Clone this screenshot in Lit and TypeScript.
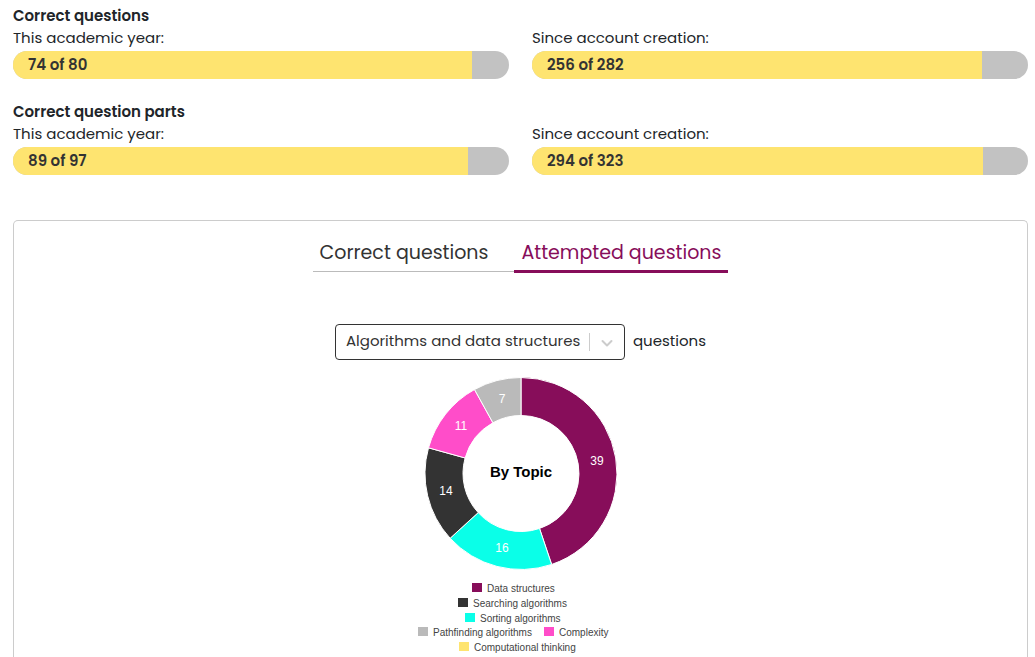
import { LitElement, html, svg, css } from "lit";
import { customElement, property, state } from "lit/decorators.js";
import { classMap } from "lit/directives/class-map.js";

@customElement("progress-meter")
export class ProgressMeter extends LitElement {
  @property() label = "";
  @property({ type: Number }) value = 0;
  @property({ type: Number }) max = 1;

  static styles = css`
    :host {
      display: block;
    }
    .label {
      padding-bottom: 2px;
      line-height: 22px;
    }
    .track {
      height: 28px;
      border-radius: 14px;
      background: #c2c2c2;
      overflow: hidden;
    }
    .fill {
      box-sizing: border-box;
      height: 100%;
      padding-left: 15px;
      background: #fee470;
      color: #333;
      font-weight: 600;
      line-height: 28px;
      white-space: nowrap;
    }
  `;

  render() {
    return html`
      <div class="label" id="label">${this.label}</div>
      <div
        class="track"
        role="progressbar"
        aria-labelledby="label"
        aria-valuemin="0"
        aria-valuenow=${this.value}
        aria-valuemax=${this.max}
      >
        <div class="fill" style="width:${(100 * this.value) / this.max}%">
          ${this.value} of ${this.max}
        </div>
      </div>
    `;
  }
}

interface Slice {
  name: string;
  count: number;
  color: string;
}

const DATA: Slice[] = [
  { name: "Data structures", count: 39, color: "#870d5a" },
  { name: "Sorting algorithms", count: 16, color: "#0affe8" },
  { name: "Searching algorithms", count: 14, color: "#333333" },
  { name: "Complexity", count: 11, color: "#ff4dc9" },
  { name: "Pathfinding algorithms", count: 7, color: "#bababa" },
];

const LEGEND = [
  { name: "Data structures", color: "#870d5a", x: 72, y: 220 },
  { name: "Searching algorithms", color: "#333333", x: 58, y: 235 },
  { name: "Sorting algorithms", color: "#0affe8", x: 65, y: 250 },
  { name: "Pathfinding algorithms", color: "#bababa", x: 18, y: 264 },
  { name: "Complexity", color: "#ff4dc9", x: 144, y: 264 },
  { name: "Computational thinking", color: "#fee470", x: 59, y: 279 },
];

@customElement("topic-donut")
export class TopicDonut extends LitElement {
  static styles = css`
    :host {
      display: block;
    }
    svg {
      display: block;
      font-family: "Liberation Sans", Arial, sans-serif;
    }
    .slice {
      stroke: #fff;
      stroke-width: 1px;
    }
    .count {
      fill: #fff;
      font-size: 12px;
      text-anchor: middle;
    }
    .title {
      font-size: 15px;
      font-weight: 700;
      text-anchor: middle;
    }
    .key {
      fill: #444;
      font-size: 10px;
    }
  `;

  private slices() {
    const cx = 121;
    const cy = 105.5;
    const outer = 96;
    const inner = 58;
    const middle = 77;
    const total = DATA.reduce((sum, d) => sum + d.count, 0);
    const at = (r: number, a: number) =>
      `${(cx + r * Math.sin(a)).toFixed(2)} ${(cy - r * Math.cos(a)).toFixed(2)}`;
    let start = 0;
    return DATA.map((d) => {
      const end = start + (d.count / total) * Math.PI * 2;
      const mid = (start + end) / 2;
      const large = end - start > Math.PI ? 1 : 0;
      const path = `M${at(outer, start)}A${outer} ${outer} 0 ${large} 1 ${at(outer, end)}L${at(inner, end)}A${inner} ${inner} 0 ${large} 0 ${at(inner, start)}Z`;
      start = end;
      return svg`
        <path class="slice" fill=${d.color} d=${path}></path>
        <text class="count" x=${Math.round(cx + middle * Math.sin(mid))} y=${Math.round(cy - middle * Math.cos(mid)) + 4}>${d.count}</text>
      `;
    });
  }

  render() {
    return html`
      <svg width="242" height="286" role="img" aria-label="Questions by topic">
        ${this.slices()}
        <text class="title" x="121" y="109">By Topic</text>
        ${LEGEND.map(
          (k) => svg`
            <rect x=${k.x} y=${k.y - 5} width="10" height="9" fill=${k.color}></rect>
            <text class="key" x=${k.x + 15} y=${k.y + 4}>${k.name}</text>
          `
        )}
      </svg>
    `;
  }
}

@customElement("app-root")
export class AppRoot extends LitElement {
  @state() private tab = 1;

  static styles = css`
    :host {
      box-sizing: border-box;
      display: flex;
      flex-direction: column;
      min-height: 100vh;
      padding: 5px 7px 0 13px;
      background: #fff;
      color: #212529;
      font-family: Poppins, Inter, sans-serif;
      font-size: 15px;
      font-weight: 400;
    }
    .stats {
      margin-bottom: 22px;
    }
    .heading {
      margin: 0;
      font-size: 15px;
      font-weight: 600;
      line-height: 22px;
    }
    .pair {
      display: grid;
      grid-template-columns: 1fr 1fr;
      column-gap: 23px;
    }
    .card {
      display: flex;
      flex: 1;
      flex-direction: column;
      align-items: center;
      margin-top: 23px;
      border: 1px solid #ccc;
      border-bottom: 0;
      border-radius: 5px 5px 0 0;
    }
    .tabs {
      display: flex;
      margin-top: 14px;
      padding-bottom: 1px;
    }
    .tab {
      height: 37px;
      margin: 0;
      padding: 0 7px 1px;
      border: 0;
      background: none;
      color: #333;
      font: inherit;
      font-size: 19px;
      line-height: 34px;
      box-shadow: inset 0 -1px #bbb;
      cursor: pointer;
    }
    .tab:first-child {
      padding-right: 26px;
    }
    .tab.active {
      height: 38px;
      padding-bottom: 2px;
      color: #870d5a;
      box-shadow: inset 0 -3px #870d5a;
    }
    .filter {
      display: flex;
      align-items: center;
      gap: 8px;
      margin-top: 50px;
    }
    .picker {
      display: grid;
      align-items: center;
    }
    .picker > * {
      grid-area: 1 / 1;
    }
    select {
      appearance: none;
      width: 290px;
      height: 36px;
      padding: 0 38px 3px 10px;
      border: 1px solid #333;
      border-radius: 4px;
      background: #fff;
      color: #333;
      font: inherit;
    }
    .arrow {
      justify-self: end;
      pointer-events: none;
    }
    .suffix {
      line-height: 34px;
      padding-bottom: 2px;
    }
    .chart {
      margin-top: 8px;
    }
  `;

  private renderStats(title: string, year: number[], all: number[]) {
    return html`
      <section class="stats">
        <h2 class="heading">${title}</h2>
        <div class="pair">
          <progress-meter label="This academic year:" .value=${year[0]} .max=${year[1]}></progress-meter>
          <progress-meter label="Since account creation:" .value=${all[0]} .max=${all[1]}></progress-meter>
        </div>
      </section>
    `;
  }

  render() {
    return html`
      ${this.renderStats("Correct questions", [74, 80], [256, 282])}
      ${this.renderStats("Correct question parts", [89, 97], [294, 323])}
      <section class="card">
        <div class="tabs" role="tablist">
          ${["Correct questions", "Attempted questions"].map(
            (name, i) => html`
              <button
                role="tab"
                aria-selected=${this.tab === i ? "true" : "false"}
                class=${classMap({ tab: true, active: this.tab === i })}
                @click=${() => (this.tab = i)}
              >${name}</button>
            `
          )}
        </div>
        <div class="filter">
          <div class="picker">
            <select id="subject">
              <option>Algorithms and data structures</option>
            </select>
            <svg class="arrow" width="36" height="20" aria-hidden="true">
              <path d="M0.5 1V19" stroke="#ccc"></path>
              <path d="M13.5 9l4.500 4.500L22.500 9" fill="none" stroke="#ccc" stroke-width="2" stroke-linecap="round" stroke-linejoin="round"></path>
            </svg>
          </div>
          <label class="suffix" for="subject">questions</label>
        </div>
        <topic-donut class="chart"></topic-donut>
      </section>
    `;
  }
}
